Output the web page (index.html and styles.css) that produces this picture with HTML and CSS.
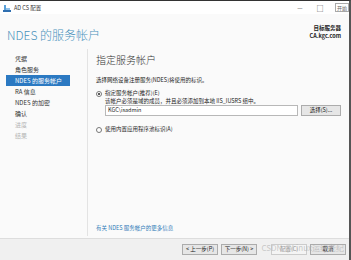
FILE: index.html
```html
<!DOCTYPE html>
<html lang="zh">
	<head>
		<meta charset="UTF-8">
		<title>AD CS 配置</title>
		<link rel="stylesheet" href="styles.css">
	</head>
	<body>
		<div class="window">
			<div class="titlebar">
				<svg class="appicon" width="8" height="8" viewBox="0 0 8 8">
					<rect x="0" y="6" width="8" height="2" fill="#2f6fb0"/>
					<rect x="1" y="1" width="2" height="5" fill="#5aa0d8"/>
					<rect x="3" y="4" width="4" height="2" fill="#8fc0e8"/>
				</svg>
				<span class="apptitle">AD CS 配置</span>
				<span class="spacer"></span>
				<span class="ctl">—</span>
				<span class="ctl box">□</span>
				<span class="start">开始</span>
			</div>
			<div class="header">
				<h1>NDES 的服务帐户</h1>
				<div class="target">
					<div>目标服务器</div>
					<div>CA.kgc.com</div>
				</div>
			</div>
			<div class="main">
				<ul class="nav">
					<li>凭据</li>
					<li>角色服务</li>
					<li class="active">NDES 的服务帐户</li>
					<li>RA 信息</li>
					<li>NDES 的加密</li>
					<li>确认</li>
					<li class="off">进度</li>
					<li class="off">结果</li>
				</ul>
				<div class="content">
					<h2>指定服务帐户</h2>
					<p class="intro">选择网络设备注册服务(NDES)将使用的标识。</p>
					<div class="option">
						<span class="radio on"></span>
						<div class="optbody">
							<div>指定服务帐户(推荐)(E)</div>
							<div>该帐户必须是域的成员，并且必须添加到本地 IIS_IUSRS 组中。</div>
							<div class="userrow">
								<div class="field">KGC\isadmin</div>
								<div class="btn">选择(S)...</div>
							</div>
						</div>
					</div>
					<div class="option second">
						<span class="radio"></span>
						<div class="optbody">使用内置应用程序池标识(A)</div>
					</div>
					<span class="grow"></span>
					<a class="more">有关 NDES 服务帐户的更多信息</a>
				</div>
			</div>
			<div class="footer">
				<div class="btn wide">&lt; 上一步(P)</div>
				<div class="btn wide">下一步(N) &gt;</div>
				<div class="btn wide off gap">配置(C)</div>
				<div class="btn wide">取消</div>
				<span class="mark">CSDN @Linux运维老纪</span>
			</div>
		</div>
	</body>
</html>
```

FILE: styles.css
```css
body {
	margin: 0;
	font-family: "Noto Sans CJK SC", "Noto Sans", sans-serif;
	background: #ffffff;
	color: #222222;
}

.window {
	width: 351px;
	height: 260px;
	box-sizing: border-box;
	border-top: 1px solid #333333;
	border-right: 2px solid #555555;
	display: flex;
	flex-direction: column;
	background: #fafafa;
}

.titlebar {
	height: 13px;
	display: flex;
	align-items: center;
	padding-left: 3px;
	background: #ffffff;
	font-size: 5.5px;
}

.appicon { margin-right: 3px; }

.apptitle { color: #333333; }

.spacer { flex: 1; }

.ctl {
	width: 20px;
	text-align: center;
	color: #444444;
	font-size: 6px;
}

.ctl.box { font-size: 7px; }

.start {
	margin-left: 5px;
	padding: 0 1px;
	border: 1px solid #aaaaaa;
	color: #666666;
	font-size: 5px;
	line-height: 7px;
	align-self: flex-start;
	margin-top: 2px;
}

.header {
	height: 35px;
	display: flex;
	align-items: center;
	justify-content: space-between;
	padding: 0 8px 0 7px;
}

.header h1 {
	margin: 6px 0 0;
	font-weight: 300;
	font-size: 12px;
	color: #4a92bc;
}

.target {
	text-align: right;
	font-size: 5.5px;
	font-weight: bold;
	line-height: 8px;
	color: #222222;
}

.main {
	flex: 1;
	display: flex;
}

.nav {
	list-style: none;
	margin: 0;
	padding: 4px 0 0 6px;
	width: 81px;
	border-right: 1px solid #e3e3e3;
	margin-bottom: 2px;
	font-size: 6px;
}

.nav li {
	height: 11px;
	line-height: 11px;
	padding-left: 9px;
	width: 55px;
	color: #333333;
}

.nav li.active {
	background: #2b79c2;
	color: #ffffff;
}

.nav li.off { color: #b5b5b5; }

.content {
	flex: 1;
	display: flex;
	flex-direction: column;
	padding: 3px 8px 0 8px;
	font-size: 5.5px;
}

.content h2 {
	margin: 0;
	font-weight: 300;
	font-size: 10px;
	color: #333333;
}

.intro { margin: 9px 0 5px; }

.option {
	display: flex;
	align-items: flex-start;
	gap: 3px;
}

.option.second { margin-top: 9px; }

.radio {
	width: 4px;
	height: 4px;
	margin-top: 2px;
	border: 1px solid #777777;
	border-radius: 50%;
	background: #ffffff;
	position: relative;
}

.radio.on::after {
	content: "";
	position: absolute;
	left: 1px; top: 1px;
	width: 2px; height: 2px;
	border-radius: 50%;
	background: #222222;
}

.optbody {
	flex: 1;
	line-height: 8px;
}

.userrow {
	display: flex;
	gap: 3px;
	margin-top: 0;
}

.field {
	flex: 1;
	height: 9px;
	line-height: 9px;
	border: 1px solid #b8b8b8;
	background: #ffffff;
	padding-left: 2px;
}

.btn {
	width: 38px;
	height: 9px;
	line-height: 9px;
	border: 1px solid #acacac;
	background: #e6e6e6;
	text-align: center;
	font-size: 5.5px;
	color: #222222;
}

.grow { flex: 1; }

.more {
	color: #2f7ab8;
	margin-bottom: 6px;
}

.footer {
	height: 21px;
	border-top: 1px solid #dddddd;
	background: #f0f0f0;
	display: flex;
	align-items: center;
	justify-content: flex-end;
	gap: 3px;
	padding-right: 3px;
	position: relative;
}

.btn.wide { width: 34px; }

.btn.off {
	color: #999999;
	background: #f4f4f4;
	border-color: #cccccc;
}

.btn.gap { margin-left: 11px; }

.mark {
	position: absolute;
	right: 5px;
	top: 3px;
	font-size: 8px;
	color: rgba(170, 170, 170, 0.6);
}
```
